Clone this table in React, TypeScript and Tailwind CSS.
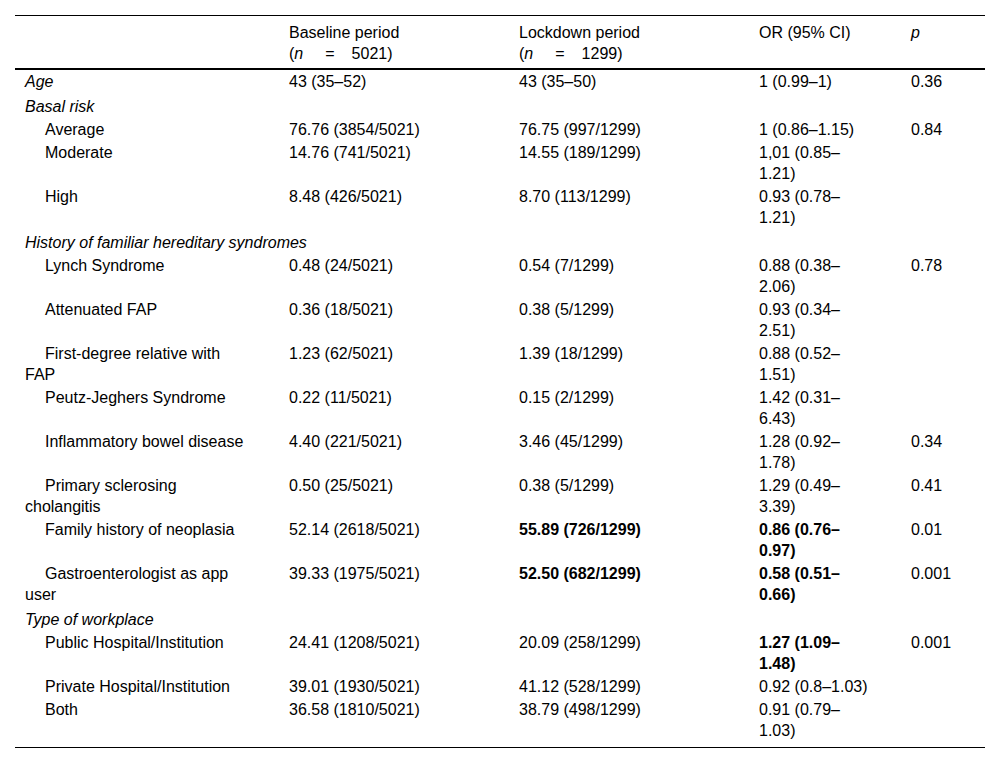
import React from "react"

type Cell = { text: React.ReactNode; bold?: boolean }

interface Row {
  label: string
  section?: boolean
  cells?: [Cell, Cell, Cell, Cell]
}

const c = (text: string, bold = false): Cell => ({ text, bold })
const empty = c("")

const rows: Row[] = [
  { label: "Age", section: true, cells: [c("43 (35–52)"), c("43 (35–50)"), c("1 (0.99–1)"), c("0.36")] },
  { label: "Basal risk", section: true },
  { label: "Average", cells: [c("76.76 (3854/5021)"), c("76.75 (997/1299)"), c("1 (0.86–1.15)"), c("0.84")] },
  { label: "Moderate", cells: [c("14.76 (741/5021)"), c("14.55 (189/1299)"), c("1,01 (0.85–1.21)"), empty] },
  { label: "High", cells: [c("8.48 (426/5021)"), c("8.70 (113/1299)"), c("0.93 (0.78–1.21)"), empty] },
  { label: "History of familiar hereditary syndromes", section: true },
  { label: "Lynch Syndrome", cells: [c("0.48 (24/5021)"), c("0.54 (7/1299)"), c("0.88 (0.38–2.06)"), c("0.78")] },
  { label: "Attenuated FAP", cells: [c("0.36 (18/5021)"), c("0.38 (5/1299)"), c("0.93 (0.34–2.51)"), empty] },
  { label: "First-degree relative with FAP", cells: [c("1.23 (62/5021)"), c("1.39 (18/1299)"), c("0.88 (0.52–1.51)"), empty] },
  { label: "Peutz-Jeghers Syndrome", cells: [c("0.22 (11/5021)"), c("0.15 (2/1299)"), c("1.42 (0.31–6.43)"), empty] },
  { label: "Inflammatory bowel disease", cells: [c("4.40 (221/5021)"), c("3.46 (45/1299)"), c("1.28 (0.92–1.78)"), c("0.34")] },
  { label: "Primary sclerosing cholangitis", cells: [c("0.50 (25/5021)"), c("0.38 (5/1299)"), c("1.29 (0.49–3.39)"), c("0.41")] },
  { label: "Family history of neoplasia", cells: [c("52.14 (2618/5021)"), c("55.89 (726/1299)", true), c("0.86 (0.76–0.97)", true), c("0.01")] },
  { label: "Gastroenterologist as app user", cells: [c("39.33 (1975/5021)"), c("52.50 (682/1299)", true), c("0.58 (0.51–0.66)", true), c("0.001")] },
  { label: "Type of workplace", section: true },
  { label: "Public Hospital/Institution", cells: [c("24.41 (1208/5021)"), c("20.09 (258/1299)"), c("1.27 (1.09–1.48)", true), c("0.001")] },
  { label: "Private Hospital/Institution", cells: [c("39.01 (1930/5021)"), c("41.12 (528/1299)"), c("0.92 (0.8–1.03)"), empty] },
  { label: "Both", cells: [c("36.58 (1810/5021)"), c("38.79 (498/1299)"), c("0.91 (0.79–1.03)"), empty] },
]

const pads = ["pr-[31px]", "pr-[24px]", "pr-[24px]", "pr-[32px]", "pr-[10px]"]

function Count({ n }: { n: string }) {
  return (
    <>
      (<i>n</i>
      <span className="inline-block w-[22px]" />=<span className="inline-block w-[17px]" />
      {n})
    </>
  )
}

export default function App() {
  return (
    <div className="min-h-[763px] bg-white px-[15px] pt-[15px] text-[16px] leading-[21px] text-black" style={{ fontFamily: '"Liberation Sans", Arial, sans-serif' }}>
      <table className="w-[970px] table-fixed border-collapse border-t border-b border-black">
        <colgroup>
          <col className="w-[264px]" />
          <col className="w-[230px]" />
          <col className="w-[240px]" />
          <col className="w-[152px]" />
          <col className="w-[84px]" />
        </colgroup>
        <thead>
          <tr className="border-b-2 border-black align-top">
            <th className={`pl-[10px] pt-[6px] pb-[4px] text-left font-normal ${pads[0]}`}></th>
            <th className={`pl-[10px] pt-[6px] pb-[4px] text-left font-normal ${pads[1]}`}>
              Baseline period
              <br />
              <Count n="5021" />
            </th>
            <th className={`pl-[10px] pt-[6px] pb-[4px] text-left font-normal ${pads[2]}`}>
              Lockdown period
              <br />
              <Count n="1299" />
            </th>
            <th className={`pl-[10px] pt-[6px] pb-[4px] text-left font-normal ${pads[3]}`}>OR (95% CI)</th>
            <th className={`pl-[10px] pt-[6px] pb-[4px] text-left font-normal italic ${pads[4]}`}>p</th>
          </tr>
        </thead>
        <tbody>
          {rows.map((row, i) => {
            const first = i === 0
            const last = i === rows.length - 1
            const beforeSection = !last && rows[i + 1].section
            const pt = first ? "pt-[1px]" : row.section ? "pt-[2px]" : "pt-[1px]"
            const pb = last ? "pb-[6px]" : beforeSection ? "pb-[2px]" : "pb-[1px]"
            const py = `${pt} ${pb}`
            if (row.section && !row.cells) {
              return (
                <tr key={row.label}>
                  <td colSpan={5} className={`pl-[10px] italic ${py}`}>{row.label}</td>
                </tr>
              )
            }
            return (
              <tr key={row.label} className="align-top">
                <td className={`pl-[10px] ${pads[0]} ${py} ${row.section ? "italic" : "indent-[20px]"}`}>{row.label}</td>
                {row.cells!.map((cell, j) => (
                  <td key={j} className={`pl-[10px] ${pads[j + 1]} ${py} ${cell.bold ? "font-bold" : ""}`}>
                    {cell.text}
                  </td>
                ))}
              </tr>
            )
          })}
        </tbody>
      </table>
    </div>
  )
}
